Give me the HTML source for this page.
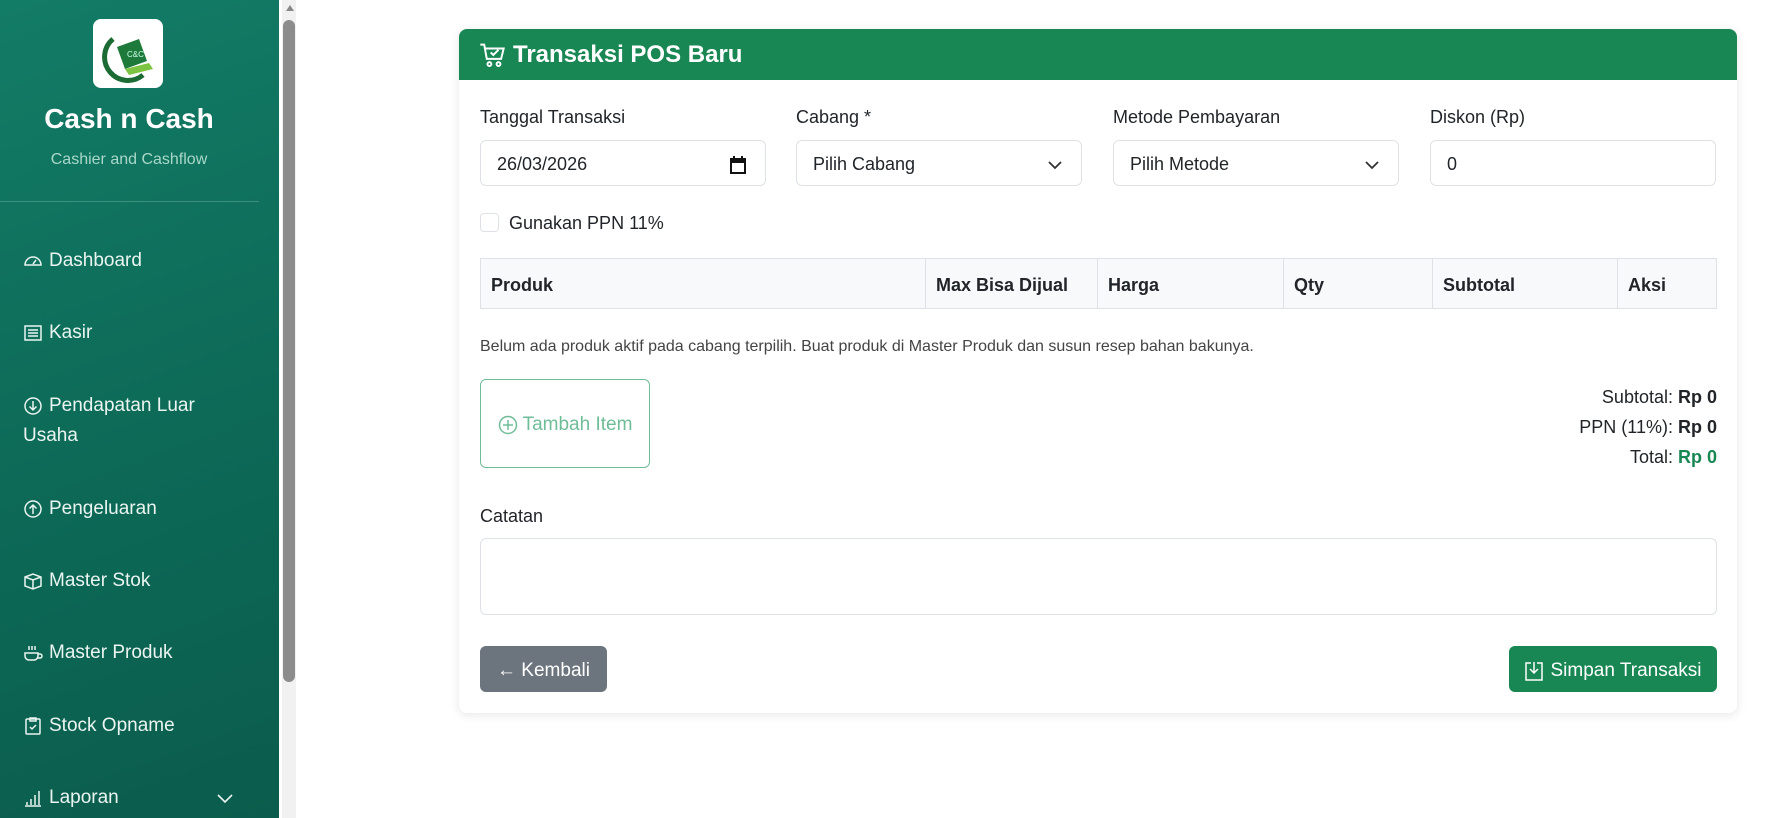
<!DOCTYPE html>
<html><head><meta charset="utf-8"><style>
*{box-sizing:border-box;margin:0;padding:0}
body{width:1774px;height:818px;overflow:hidden;background:#fff;font-family:"Liberation Sans",sans-serif;color:#212529;position:relative}
.abs{position:absolute}
#side{left:0;top:0;width:279px;height:818px;background:linear-gradient(160deg,#137c66 0%,#0d6b58 50%,#0b5c4c 100%)}
.logo{left:93px;top:19px;width:70px;height:69px;background:#fff;border-radius:8px}
.brand{left:0;width:258px;text-align:center;color:#fff}
.menu{left:23px;color:#eaf5f1;font-size:19px;display:flex;align-items:center;gap:6px}
.menu svg{width:20px;height:20px;stroke:#eaf5f1;fill:none;stroke-width:1.5}
#sb{left:282px;top:0;width:14px;height:818px;background:#f1f1f1}
.card{left:459px;top:29px;width:1278px;height:684px;border-radius:8px;box-shadow:0 2px 10px rgba(0,0,0,.1);background:#fff;overflow:hidden}
.hdr{left:0;top:0;width:100%;height:51px;background:#198754;color:#fff;font-weight:bold;font-size:24px;display:flex;align-items:center;padding-left:20px;gap:8px}
.lbl{font-size:18px;color:#212529}
.inp{height:46px;border:1px solid #dee2e6;border-radius:6px;font-size:18px;display:flex;align-items:center;padding-left:16px;justify-content:space-between;padding-right:18px;padding-top:3px}
table{border-collapse:collapse;font-size:18px;font-weight:bold}
td{border:1px solid #dee2e6;background:#f8f9fa;height:50px;padding-left:10px;padding-top:3px}
</style></head><body>
<div id="side" class="abs">
 <div class="abs logo"><svg width="70" height="69" viewBox="0 0 70 69"><path d="M20 20 A22 22 0 0 0 50 56" stroke="#1c6b34" stroke-width="5" fill="none"/><path d="M24 28 L46 20 L54 42 L32 50Z" fill="#1d7a3a"/><path d="M32 50 L56 44 L60 50 L36 56Z" fill="#7dc442"/><text x="34" y="38" font-size="8" fill="#cfe" font-family="Liberation Sans">C&amp;C</text></svg></div>
 <div class="abs brand" style="top:103px;font-size:28px;font-weight:bold">Cash n Cash</div>
 <div class="abs brand" style="top:151px;font-size:16px;color:#a8d8c8">Cashier and Cashflow</div>
 <div class="abs" style="left:0;top:201px;width:259px;height:1px;background:rgba(255,255,255,.2)"></div>
 <div class="abs menu" style="top:250px"><svg viewBox="0 0 20 20"><path d="M2 14a8 8 0 1 1 16 0z"/><path d="M10 13l3-4"/></svg>Dashboard</div>
 <div class="abs menu" style="top:322px"><svg viewBox="0 0 20 20"><rect x="2" y="3" width="16" height="14"/><path d="M5 7h10M5 10h10M5 13h10"/></svg>Kasir</div>
 <div class="abs menu" style="top:395px"><svg viewBox="0 0 20 20"><circle cx="10" cy="10" r="8"/><path d="M10 5v9M6.5 10.5L10 14l3.5-3.5"/></svg>Pendapatan Luar</div>
 <div class="abs" style="left:23px;top:425px;color:#eaf5f1;font-size:19px">Usaha</div>
 <div class="abs menu" style="top:498px"><svg viewBox="0 0 20 20"><circle cx="10" cy="10" r="8"/><path d="M10 15V6M6.5 9.5L10 6l3.5 3.5"/></svg>Pengeluaran</div>
 <div class="abs menu" style="top:570px"><svg viewBox="0 0 20 20"><path d="M2 6l8-3 8 3v9l-8 3-8-3zM2 6l8 3 8-3M10 9v9"/></svg>Master Stok</div>
 <div class="abs menu" style="top:642px"><svg viewBox="0 0 20 20"><path d="M2 10h13v3a4 4 0 0 1-4 4H6a4 4 0 0 1-4-4zM15 11h2a2 2 0 0 1 0 4h-2M6 3v4M9 3v4M12 3v4"/></svg>Master Produk</div>
 <div class="abs menu" style="top:715px"><svg viewBox="0 0 20 20"><rect x="3" y="3" width="14" height="15" rx="1"/><path d="M7 2h6v3H7zM7 11l2 2 4-4"/></svg>Stock Opname</div>
 <div class="abs menu" style="top:787px"><svg viewBox="0 0 20 20"><path d="M2 18h16M4 14v3M8 11v6M12 7v10M16 3v14"/></svg>Laporan</div>
 <svg class="abs" style="left:216px;top:792px" width="18" height="12" viewBox="0 0 18 12"><path d="M2 3l7 7 7-7" stroke="#eaf5f1" stroke-width="1.6" fill="none"/></svg>
</div>
<div id="sb" class="abs"><div class="abs" style="left:4px;top:5px;width:0;height:0;border-left:4px solid transparent;border-right:4px solid transparent;border-bottom:6px solid #888"></div><div class="abs" style="left:1px;top:20px;width:12px;height:662px;background:#8c8c8c;border-radius:6px"></div></div>

<div class="abs card">
 <div class="abs hdr"><svg width="26" height="26" viewBox="0 0 20 20" fill="none" stroke="#fff" stroke-width="1.5"><path d="M1 2h3l2 11h11l2-8H5"/><circle cx="8" cy="17" r="1.5"/><circle cx="15" cy="17" r="1.5"/><path d="M9 8l2 2 4-4"/></svg>Transaksi POS Baru</div>
 <div class="abs lbl" style="left:21px;top:78px">Tanggal Transaksi</div>
 <div class="abs lbl" style="left:337px;top:78px">Cabang *</div>
 <div class="abs lbl" style="left:654px;top:78px">Metode Pembayaran</div>
 <div class="abs lbl" style="left:971px;top:78px">Diskon (Rp)</div>
 <div class="abs inp" style="left:21px;top:111px;width:286px">26/03/2026<svg width="18" height="20" viewBox="0 0 18 20"><rect x="2" y="4" width="14" height="14" fill="none" stroke="#111" stroke-width="2"/><rect x="2" y="4" width="14" height="4" fill="#111"/><path d="M5 1v4M13 1v4" stroke="#111" stroke-width="2"/></svg></div>
 <div class="abs inp" style="left:337px;top:111px;width:286px">Pilih Cabang<svg width="16" height="10" viewBox="0 0 16 10"><path d="M2 2l6 6 6-6" stroke="#333" stroke-width="1.8" fill="none"/></svg></div>
 <div class="abs inp" style="left:654px;top:111px;width:286px">Pilih Metode<svg width="16" height="10" viewBox="0 0 16 10"><path d="M2 2l6 6 6-6" stroke="#333" stroke-width="1.8" fill="none"/></svg></div>
 <div class="abs inp" style="left:971px;top:111px;width:286px">0</div>
 <div class="abs" style="left:21px;top:184px;width:19px;height:19px;border:1px solid #dee2e6;border-radius:4px"></div>
 <div class="abs lbl" style="left:50px;top:184px">Gunakan PPN 11%</div>
 <table class="abs" style="left:21px;top:229px;width:1237px"><tr><td style="width:445px">Produk</td><td style="width:172px">Max Bisa Dijual</td><td style="width:186px">Harga</td><td style="width:149px">Qty</td><td style="width:185px">Subtotal</td><td>Aksi</td></tr></table>
 <div class="abs" style="left:21px;top:309px;font-size:16px;color:#444">Belum ada produk aktif pada cabang terpilih. Buat produk di Master Produk dan susun resep bahan bakunya.</div>
 <div class="abs" style="left:21px;top:350px;width:170px;height:89px;border:1px solid #6fbd98;border-radius:6px;color:#6fbd98;font-size:19px;display:flex;align-items:center;justify-content:center;gap:5px;padding-top:3px"><svg width="20" height="20" viewBox="0 0 20 20" fill="none" stroke="#6fbd98" stroke-width="1.5"><circle cx="10" cy="10" r="8.5"/><path d="M10 5v10M5 10h10"/></svg>Tambah Item</div>
 <div class="abs" style="right:20px;top:353px;text-align:right;font-size:18px;line-height:30px">Subtotal: <b>Rp 0</b><br>PPN (11%): <b>Rp 0</b><br>Total: <b style="color:#198754">Rp 0</b></div>
 <div class="abs lbl" style="left:21px;top:477px">Catatan</div>
 <div class="abs" style="left:21px;top:509px;width:1237px;height:77px;border:1px solid #dee2e6;border-radius:6px"></div>
 <div class="abs" style="left:21px;top:617px;width:127px;height:46px;background:#6c757d;border-radius:6px;color:#fff;font-size:19px;display:flex;align-items:center;justify-content:center;padding-top:3px">← Kembali</div>
 <div class="abs" style="left:1050px;top:617px;width:208px;height:46px;background:#198754;border-radius:6px;color:#fff;font-size:19px;display:flex;align-items:center;justify-content:center;gap:6px;padding-top:3px"><svg width="20" height="22" viewBox="0 0 20 22" fill="none" stroke="#fff" stroke-width="1.5"><path d="M7 3H2v17h16V3h-5M10 2v11M6 9l4 4 4-4"/></svg>Simpan Transaksi</div>
</div>
</body></html>
